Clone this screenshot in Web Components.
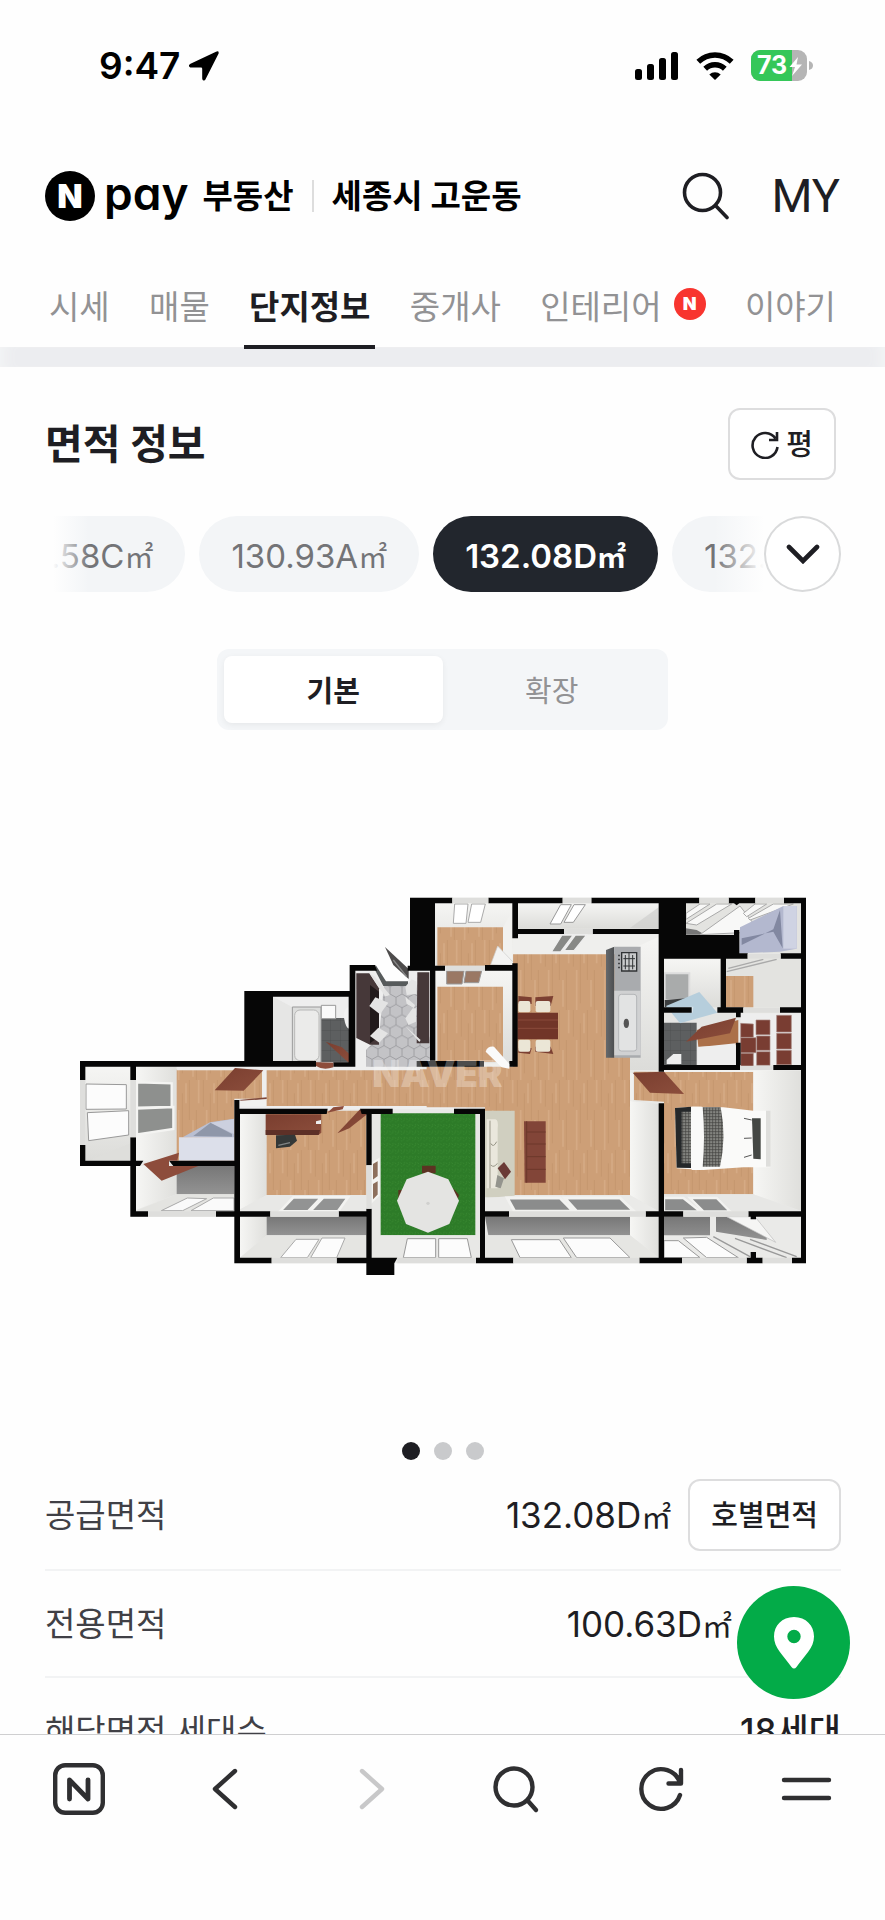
<!DOCTYPE html>
<html lang="ko">
<head>
<meta charset="utf-8">
<meta name="viewport" content="width=device-width, initial-scale=1">
<title>Npay 부동산 - 단지정보</title>
<style>
  body { margin: 0; background: #fefefe; color: #1e1e23; font-family: Inter, "Noto Sans CJK KR", sans-serif; }
</style>
</head>
<body>
<estate-app></estate-app>

<script>
const define = (name, html) => {
  const template = document.createElement('template');
  template.innerHTML = `<style>
    *, *::before, *::after { box-sizing: border-box; }
    button { font: inherit; color: inherit; background: none; border: 0; padding: 0; margin: 0; }
    a { color: inherit; text-decoration: none; }
    svg { display: block; flex: none; }
  </style>` + html;
  customElements.define(name, class extends HTMLElement {
    constructor() {
      super();
      this.attachShadow({ mode: 'open' }).append(template.content.cloneNode(true));
    }
  });
};

define('status-bar', `
<style>
  :host { display: flex; align-items: center; justify-content: space-between; height: 132px; padding: 0 72px 0 99px; color: #000; flex: none; }
  .side { display: flex; align-items: center; }
  time { font: 600 37px/44px Inter, sans-serif; margin-right: 9px; }
  .icons { gap: 17px; }
</style>
<div class="side"><time>9:47</time>
  <svg width="30" height="30" viewBox="0 0 30 30" aria-hidden="true"><path d="M29.600 2.600Q30.200-.6 27 .7L1.500 12.700Q-1.200 14.500 .6 16 1.200 16.600 2.500 16.600H12Q13.200 16.600 13.200 17.800V27.500Q13.600 31 16.300 28.700Z"/></svg>
</div>
<div class="side icons">
  <svg width="44" height="28" viewBox="0 0 44 28" aria-label="신호"><rect y="17" width="7" height="11" rx="2.500"/><rect x="12" y="12" width="7" height="16" rx="2.500"/><rect x="24" y="6" width="7" height="22" rx="2.500"/><rect x="36" width="7" height="28" rx="2.500"/></svg>
  <svg width="38" height="28" viewBox="0 0 38 28" aria-label="Wi-Fi"><path d="M2.300 9.700a24 24 0 0 1 33.400 0M9.200 16.700a14.200 14.200 0 0 1 19.600 0" fill="none" stroke="#000" stroke-width="5.400"/><path d="M19 28l-5.700-5.500a8.300 8.300 0 0 1 11.400 0z"/></svg>
  <svg width="62" height="32" viewBox="0 0 62 32" aria-label="배터리 73%"><defs><clipPath id="cell"><rect width="56" height="31" rx="9"/></clipPath></defs><g clip-path="url(#cell)"><rect width="56" height="31" fill="#b5b5b5"/><rect width="41" height="31" fill="#35c759"/></g><path d="M58 11q4 1 4 4.500t-4 4.500z" fill="#b5b5b5"/><text x="6" y="24" font-family="Inter, sans-serif" font-weight="700" font-size="25" fill="#fff">73</text><path d="M47 7L38.500 17H44l-3 9L51 14.500h-5.500z" fill="#fff"/></svg>
</div>`);

define('site-header', `
<style>
  :host { display: flex; align-items: center; height: 128px; padding: 0 45px; flex: none; color: #000; }
  .brand { display: flex; align-items: center; font-weight: 700; font-size: 33px; line-height: 50px; }
  .mark { width: 50px; height: 50px; border-radius: 50%; background: #000; color: #fff; font: 900 33px/50px Inter, sans-serif; text-align: center; }
  .pay { font: 600 46px/50px Inter, sans-serif; font-feature-settings: "cv11"; margin: 0 14px 6px 9px; }
  .bar { width: 2px; height: 32px; background: #ddd; margin: 0 18px; }
  .place { font-weight: 700; font-size: 33px; line-height: 50px; }
  .tools { margin-left: auto; display: flex; align-items: center; gap: 41px; color: #1e1e23; }
  .my { font: 400 47px/56px Roboto, sans-serif; }
</style>
<a class="brand" href="#home"><span class="mark">N</span><span class="pay">pay</span><span>부동산</span></a>
<span class="bar"></span>
<a class="place" href="#area">세종시 고운동</a>
<div class="tools">
  <button aria-label="검색"><svg width="48" height="48" viewBox="0 0 48 48" fill="none" stroke="#1e1e23" stroke-width="3.600" stroke-linecap="round"><circle cx="20.500" cy="20.500" r="18"/><path d="M33.500 33.500L45 45.500"/></svg></button>
  <a class="my" href="#my">MY</a>
</div>`);

define('tab-link', `
<style>
  :host { display: block; height: 100%; }
  a { position: relative; display: flex; align-items: center; gap: 12px; height: 100%; padding: 6px 5px 0; font-size: 33px; line-height: 48px; color: #929294; white-space: nowrap; }
  :host([current]) a { color: #1e1e23; font-weight: 700; }
  :host([current]) a::after { content: ""; position: absolute; left: 0; right: 0; bottom: -2px; height: 4px; background: #1e1e23; }
</style>
<a href="#tab"><slot></slot></a>`);

define('new-badge', `
<style>:host { display: block; width: 32px; height: 32px; margin-bottom: 6px; border-radius: 50%; background: #f8352f; color: #fff; font: 900 18px/32px Inter, sans-serif; text-align: center; }</style>
<slot></slot>`);

define('tab-bar', `
<style>
  :host { display: block; flex: none; }
  nav { display: flex; justify-content: space-between; height: 87px; padding: 0 44px; position: relative; z-index: 1; }
  .band { height: 20px; background: #ecedf0; box-shadow: inset 14px 0 14px -10px #f4f5f6, inset -14px 0 14px -10px #f4f5f6; }
</style>
<nav>
  <tab-link>시세</tab-link><tab-link>매물</tab-link><tab-link current>단지정보</tab-link><tab-link>중개사</tab-link><tab-link>인테리어<new-badge>N</new-badge></tab-link><tab-link>이야기</tab-link>
</nav>
<div class="band"></div>`);

define('outline-button', `
<style>
  :host { display: block; flex: none; }
  button { display: flex; align-items: center; gap: 7px; height: 72px; padding: 2px 21px 0; border: 2px solid #ddddde; border-radius: 12px; background: #fff; font-size: 29px; line-height: 40px; font-weight: 500; color: #1e1e23; white-space: nowrap; }
</style>
<button><slot></slot></button>`);

define('area-chip', `
<style>
  :host { display: block; flex: none; }
  button { height: 76px; padding: 4px 32px 0; border-radius: 38px; background: #f3f5f7; color: #737477; font-size: 33px; line-height: 48px; white-space: nowrap; }
  ::slotted(small) { font-size: 29px; line-height: 40px; }
  :host([selected]) button { background: #22262d; color: #fff; font-weight: 600; }
</style>
<button><slot></slot></button>`);

define('chip-strip', `
<style>
  :host { display: flex; align-items: center; height: 76px; margin: 36px 44px 0 53px; }
  .track { position: relative; flex: 1; min-width: 0; overflow: hidden; display: flex; gap: 14px; height: 76px; }
  .track area-chip:first-child { margin-left: -88px; }
  .track::before, .track::after { content: ""; position: absolute; z-index: 1; top: 0; bottom: 0; pointer-events: none; }
  .track::before { left: 0; width: 36px; background: linear-gradient(90deg, #fefefe, #fefefe00); }
  .track::after { right: 0; width: 50px; background: linear-gradient(270deg, #fefefe, #fefefe00); }
  .more { display: grid; place-items: center; flex: none; width: 77px; height: 76px; border: 2px solid #d9dadb; border-radius: 50%; background: #fff; }
</style>
<div class="track"><area-chip>130.58C<small>㎡</small></area-chip><area-chip>130.93A<small>㎡</small></area-chip><area-chip selected>132.08D<small>㎡</small></area-chip><area-chip>132.08E<small>㎡</small></area-chip></div>
<button class="more" aria-label="면적 더보기"><svg width="34" height="20" viewBox="0 0 34 20" fill="none" stroke="#1e1e23" stroke-width="4.600" stroke-linecap="round"><path d="M3 3l14 14L31 3"/></svg></button>`);

define('plan-switch', `
<style>
  :host { display: flex; width: 451px; max-width: 90%; height: 81px; margin: 57px auto 0; padding: 7px; border-radius: 12px; background: #f4f6f8; }
  button { flex: 1; padding-top: 4px; border-radius: 8px; font-size: 29px; line-height: 40px; color: #929294; }
  .on { background: #fff; color: #1e1e23; font-weight: 600; box-shadow: 0 2px 6px #0000000f; }
</style>
<button class="on" aria-pressed="true">기본</button><button aria-pressed="false">확장</button>`);

define('floor-plan', `
<style>
  :host { display: block; margin-top: 140px; }
  svg { width: 100%; height: auto; }
</style>
<svg viewBox="-180 0 2655 1260" role="img" aria-label="132.08D㎡ 평면도">
  <defs>
    <pattern id="wood" width="84" height="210" patternUnits="userSpaceOnUse"><rect width="84" height="210" fill="#cd9f77"/><path d="M10 0V80M31 40V190M52 0V120M73 90V210" stroke="#c0916a" stroke-width="2"/><path d="M20 90V210M42 10V70M63 120V200M80 0V70" stroke="#d5aa84" stroke-width="5"/></pattern>
    <pattern id="hex" width="36" height="62" patternUnits="userSpaceOnUse"><rect width="36" height="62" fill="#c3c3c6"/><path d="M0 10L18 0 36 10V31L18 41 0 31ZM18 41V62" fill="none" stroke="#8e8e92" stroke-width="2"/></pattern>
    <pattern id="grass" width="17" height="19" patternUnits="userSpaceOnUse"><rect width="17" height="19" fill="#2d7b28"/><path d="M2 4l3 4M10 12l3-5M6 16l-3-3M14 2l-2 3" stroke="#3d9035" stroke-width="2"/></pattern>
    <pattern id="tile" width="30" height="30" patternUnits="userSpaceOnUse"><rect width="30" height="30" fill="#5d5f60"/><path d="M0 0H30M0 0V30" stroke="#484a4b" stroke-width="2"/></pattern>
    <pattern id="check" width="9" height="9" patternUnits="userSpaceOnUse"><rect width="9" height="9" fill="#83847f"/><path d="M0 2H9M2 0V9" stroke="#3f403e" stroke-width="2"/></pattern>
    <linearGradient id="wall" x2="0" y2="1"><stop stop-color="#f5f5f3"/><stop offset="1" stop-color="#dcdcd9"/></linearGradient>
    <linearGradient id="side"><stop stop-color="#f6f6f4"/><stop offset="1" stop-color="#dfdfdc"/></linearGradient>
    <linearGradient id="slate" x2="0" y2="1"><stop stop-color="#777"/><stop offset="1" stop-color="#939393"/></linearGradient>
    <linearGradient id="steel"><stop stop-color="#66696c"/><stop offset="1" stop-color="#4c4e50"/></linearGradient>
    <linearGradient id="mahogany" x2="1" y2="1"><stop stop-color="#7a3e2f"/><stop offset="1" stop-color="#8c4e3c"/></linearGradient>
  </defs>

  <path fill="#e9e9e7" d="M60 573H553V363H869V285H945L980 340H1050V83H2238V1180H523V1040H211V888H60Z"/>

  <!-- left rooms -->
  <path fill="url(#wall)" d="M76 590H211V872H76Z"/><path fill="#dededb" d="M100 866L211 820V872H90Z"/>
  <g fill="#fcfcfc" stroke="#999" stroke-width="3"><path d="M78 642L199 644V717L78 718Z"/><path d="M82 728L206 722V795L86 812Z"/></g>
  <path fill="url(#side)" d="M228 590H350V872H228Z"/>
  <g fill="#8e908e" stroke="#f4f4f2" stroke-width="7"><path d="M231 637L335 640V711L231 713Z"/><path d="M231 716L340 711V777L231 793Z"/></g>
  <path fill="url(#wood)" d="M350 598H1220V712H618V686H523V872H350Z"/>
  <path stroke="#eee" stroke-width="14" d="M613 598V690M350 594H1080"/>
  <path fill="url(#mahogany)" d="M525 594L610 601 551 662 464 661Z"/>
  <path fill="#7d4638" d="M537 690L620 682V688L545 694Z"/><path fill="#f1f1ef" d="M540 692L620 688V714H540Z"/>
  <path fill="#b9bfd2" d="M368 802L450 757 522 746V804Z"/><path fill="#8f97a9" d="M400 798L452 758 516 792V800Z"/><path fill="#ccd0df" d="M452 758L522 747V792Z"/><path fill="#dcdfea" d="M357 802H523V872H357Z"/>
  <path fill="url(#side)" d="M228 888H350V972L228 1020Z"/><path fill="url(#slate)" d="M350 888H523V973H350Z"/><path fill="#e4e4e1" d="M228 1022L350 973H523V1024H228Z"/>
  <g fill="#fafafa" stroke="#aaa" stroke-width="3"><path d="M304 1022L382 984 440 986 368 1022Z"/><path d="M393 1022L460 984H522V1022Z"/></g>

  <!-- bathroom -->
  <path fill="#eee" d="M639 380H869V577H639Z"/><path fill="#dadad7" d="M639 380L695 410V577H639Z" opacity=".4"/><path fill="url(#tile)" d="M783 444H869V577H783Z"/>
  <path fill="#dcdddc" stroke="#999" stroke-width="3" d="M697 411H783V577H697Z"/><rect x="704" y="420" width="73" height="152" rx="16" fill="#ebebea" stroke="#b8b8b7" stroke-width="3"/>
  <path fill="#fafafa" stroke="#999" stroke-width="3" d="M784 406H827V446H784Z"/><path fill="#f2f2f2" d="M869 410Q850 412 852 444 858 478 869 476Z"/>
  <path fill="url(#mahogany)" d="M797 515L846 532 868 552V580Z"/>

  <!-- entrance -->
  <path fill="#eee" d="M886 302H1110V590H886Z"/><path fill="url(#hex)" d="M972 345H1068L1110 510V590H918V540L957 500Z"/>
  <path fill="#fefefe" d="M945 283H1045V334H978Z"/><path fill="#575b5c" d="M947 285L978 334H1044V348H970L945 300Z"/>
  <path fill="#463839" d="M889 310H928L957 355V524H930L889 504Z"/><path fill="#211a1b" d="M930 345L957 365V500L930 520Z"/><path fill="#463839" d="M1072 307H1108V520H1070Z"/>
  <g fill="#e4e4e4"><path d="M928 310L945 320 990 375 976 380Z"/><path d="M928 408L946 382 985 398 960 433Z"/><path d="M930 498L955 473 984 490 958 518Z"/><path d="M1036 350L1055 328 1070 335V372L1040 375ZM1036 380L1065 405 1062 415 1040 402ZM1036 445L1058 415H1068V455L1045 465ZM1036 468L1082 510 1078 516Z"/></g>
  <path fill="#4d4b4b" d="M975 231L1046 297V327L1040 322 1000 285Z"/><path stroke="#888" stroke-width="4" d="M1000 270L1040 320"/>

  <!-- study and its balcony -->
  <path fill="url(#side)" d="M540 733H620V975L540 1020Z"/><path fill="url(#wood)" d="M620 722H919V975H620Z"/><path fill="#e8e8e6" d="M540 1024V1018L620 975H919V1024Z"/>
  <path fill="url(#mahogany)" d="M617 733H784V788L776 794H617Z"/><path fill="#5d3027" d="M617 780H780L776 795H617Z"/><path fill="#eee" d="M768 754L783 750V762H768Z"/>
  <path fill="#343838" d="M648 796L705 794 711 812 690 830 648 835Z"/><path stroke="#818585" stroke-width="4" d="M655 826L690 818"/>
  <path fill="url(#mahogany)" d="M900 718L925 730 868 775 832 790Z"/><path stroke="#eee" stroke-width="10" d="M540 713H1220"/><path fill="#8d4c3b" d="M820 712L852 708 848 718 802 728Z"/>
  <g fill="#929393" stroke="#f3f3f1" stroke-width="8"><path d="M660 1024L700 982H784L744 1024Z"/><path d="M750 1024L790 982H864L834 1024Z"/></g>
  <path fill="url(#side)" d="M540 1040H620V1096L540 1163Z"/><path fill="url(#slate)" d="M620 1040H919V1096H620Z"/><path fill="#e5e5e2" d="M540 1163L620 1096H919V1163Z"/>
  <g fill="#fcfcfc" stroke="#aaa" stroke-width="3"><path d="M662 1163L708 1108H777L742 1163Z"/><path d="M752 1163L786 1104H855L830 1163Z"/></g>

  <!-- garden -->
  <path fill="#e7e7e5" d="M935 733H1260V1163H935Z"/><path fill="url(#grass)" d="M962 730H1246V1096H962Z"/>
  <path fill="#5c3322" d="M1086 887H1127V910H1086ZM1015 960H1030V985H1015ZM1180 955L1197 975 1190 1000Z"/>
  <path fill="#e4e4e2" d="M1104 905L1165 928 1197 992 1168 1062 1104 1088 1038 1062 1011 992 1040 928Z"/><circle cx="1104" cy="1000" r="5" fill="#d0d0ce"/>
  <g fill="#8d6f5c" stroke="#f4f4f2" stroke-width="6"><path d="M936 880L956 868V920L936 935Z"/><path d="M936 940L956 928V975L936 995Z"/></g>
  <path fill="#e8e8e6" d="M935 1163L962 1096H1260V1163Z"/><g fill="#fcfcfc" stroke="#999" stroke-width="3"><path d="M1030 1163L1042 1106H1127V1163Z"/><path d="M1136 1163V1106H1222L1234 1163Z"/></g>

  <g transform="translate(1110 0)">
    <!-- top rooms -->
    <path fill="url(#wall)" d="M16 100H248V290H16Z"/><path fill="url(#wood)" d="M22 172H219V287H22Z"/><path fill="#f1f1ef" d="M219 172L248 120V280H219Z"/>
    <g fill="#fff" stroke="#aaa" stroke-width="3"><path d="M74 102H114L108 160H70Z"/><path d="M125 102H166L152 157H114Z"/></g>
    <path fill="#f3f3f2" stroke="#ccc" stroke-width="2" d="M203 228L250 277 247 286 182 284Z"/>
    <path fill="url(#wall)" d="M264 100H686V176H264Z"/><path fill="#ccccc9" d="M600 174L686 112V176Z" opacity=".6"/>
    <g fill="#fff" stroke="#999" stroke-width="3"><path d="M392 104H424L392 162H360Z"/><path d="M432 104H466L430 157H402Z"/></g>
    <path fill="#efefed" d="M250 194H686V255H245Z"/>
    <g fill="#888986" stroke="#eee" stroke-width="4"><path d="M396 195H430L392 246H364Z"/><path d="M436 195H470L432 242H402Z"/></g>
    <path fill="url(#wall)" d="M16 302H248V580H16Z"/><path fill="url(#wood)" d="M22 350H219V576H22Z"/>
    <g fill="#9a7864" stroke="#999" stroke-width="3"><path d="M50 303H102L96 342H50Z"/><path d="M108 303H155L146 338H102Z"/></g>

    <!-- living room -->
    <path fill="url(#wood)" d="M249 253H600V975H165V712H-10V590H249Z"/><path fill="url(#wall)" d="M600 240L686 200V600H600Z"/>
    <path fill="url(#steel)" d="M528 240L553 230V563H528Z"/><path fill="#a9abae" d="M553 230H632V563H553Z"/><path fill="#d0d1d2" d="M553 362H632V556H553Z"/><rect x="566" y="373" width="54" height="170" rx="8" fill="#e2e3e3" stroke="#b4b6b8" stroke-width="3"/>
    <path fill="#c9cbcc" stroke="#303335" stroke-width="4" d="M575 248H620V303H575Z"/><path fill="none" stroke="#303335" stroke-width="3" d="M597 248V303M580 266H615M580 288H615M586 255V298M608 255V298"/><path stroke="#303335" stroke-width="5" stroke-dasharray="5 7" d="M567 254V296"/><ellipse cx="589" cy="460" rx="8" ry="14" fill="#555"/>
    <g fill="#7c4032"><path d="M265 378L305 382V402H265ZM316 382L370 378 362 408H316ZM265 548L300 552 305 535H265ZM316 545L370 552 362 530H316Z"/></g><g fill="#ebe6d6"><rect x="265" y="393" width="36" height="34" rx="6"/><rect x="317" y="393" width="44" height="34" rx="6"/><rect x="265" y="509" width="36" height="36" rx="6"/><rect x="317" y="509" width="44" height="36" rx="6"/></g>
    <path fill="#713528" d="M262 428H384V508H262Z"/><path stroke="#8a4a3b" stroke-width="3" d="M262 450H384M262 475H384"/>
    <path fill="#d0cfc0" d="M165 722H254V982H165Z"/><path fill="#eae7dc" d="M170 748H196Q206 750 203 775V955H170Z"/><path fill="none" stroke="#999788" stroke-width="3" d="M180 752V955M182 820Q190 835 200 815M182 885Q192 895 202 880"/><path fill="#6a3a36" d="M203 895L222 876 243 905 225 928Z"/><path fill="#94948d" d="M202 915L222 925 212 955 196 950Z"/>
    <path fill="#824538" d="M282 754H347V938H284Z"/><path fill="none" stroke="#6d382b" stroke-width="3" d="M290 754V938M290 786H347M290 822H347M290 860H347M290 898H347"/>
    <path fill="url(#side)" d="M600 693L686 702V1024L600 975Z"/>
    <path fill="#eaeae8" d="M165 1024V985L254 977H600L686 1024Z"/><g fill="#8b8c8c" stroke="#f2f2f0" stroke-width="9"><path d="M232 984H390L430 1024H254Z"/><path d="M404 984H570L612 1024H440Z"/></g>
    <path fill="url(#slate)" d="M165 1040H600V1096H175Z"/><path fill="url(#side)" d="M600 1040H686V1163L600 1096Z"/><path fill="#e6e6e3" d="M165 1096H600L686 1163H165Z"/>
    <g fill="#fcfcfc" stroke="#999" stroke-width="3"><path d="M244 1109H388L424 1163H270Z"/><path d="M400 1104H540L600 1163H440Z"/></g>

    <!-- right rooms -->
    <path fill="#e3e3e0" d="M768 100H1113V250H768Z"/><path fill="#777" d="M768 175L800 180 825 194H768Z"/><g fill="#f8f8f7" stroke="#aaa" stroke-width="3"><path d="M768 130L810 102H840L768 148ZM768 160L860 102H905L800 165Z"/><path d="M810 194L930 108 970 160 935 188Z"/><path d="M940 130L975 102H1010L950 140ZM955 145L1030 102H1090L960 150Z"/></g>
    <path fill="#b3b8cf" d="M930 172L1060 108H1100V236L1050 245 928 250Z"/><path fill="#8288a1" d="M935 225L1030 178 1050 120 1058 235 1030 185 935 205Z"/><path fill="#cfd3e3" d="M1060 108H1100V236H1060Z"/>
    <path fill="url(#wall)" d="M702 268H872V412H702Z"/><path fill="#a9abab" stroke="#ddd" stroke-width="6" d="M704 310H778V390H704Z"/><path fill="#3c3e3f" d="M704 390L770 385 720 412H704Z"/>
    <path fill="#e3e3e0" d="M888 268H1113V412H888Z"/><path fill="url(#wood)" d="M888 318H970V412H888Z"/><path stroke="#aaa" stroke-width="4" d="M890 305L1040 268M895 295L1000 268"/>
    <path fill="#e5e5e3" d="M702 430H920V585H702Z"/><path fill="url(#tile)" d="M702 458H800V585H702Z"/><path fill="#ab7049" d="M800 480L925 450V525L805 530Z"/><path fill="#eee" d="M802 532L917 520V585H802Z"/>
    <path fill="#b6cedc" d="M708 408L808 366 862 428 750 460Z"/><path fill="#fff" d="M732 412L790 410 788 428H705V412Z" opacity=".5"/><path fill="url(#mahogany)" d="M768 515L815 470 918 443 900 490Z"/><path fill="#eee" d="M710 570L730 552H754V582H710Z"/>
    <path fill="#eee" d="M932 430H1113V585H932Z"/><g fill="#793d32" stroke="#a98d86" stroke-width="2"><path d="M932 460L970 462V502H932ZM978 450H1020V494H978ZM1040 436H1084V486H1040ZM932 503H978V548H932ZM980 498H1020V541H980ZM1040 490H1084V537H1040ZM932 550H970V590H932ZM980 545H1020V586H980ZM1040 541H1084V584H1040Z"/></g>
    <path fill="url(#wood)" d="M612 605H970V973H702V695L612 690Z"/><path stroke="#f1f1ef" stroke-width="10" d="M605 608V692M702 601H1030"/><path fill="url(#mahogany)" d="M608 608L702 605 762 672 660 668Z"/>
    <path fill="url(#side)" d="M970 602H1113V1022L970 973Z"/>
    <path fill="#fafaf9" d="M735 714L785 710 880 712 970 722 1022 722V892H940L820 900 740 895Z"/><path fill="#25282a" d="M735 714L783 710V894L740 893Z"/><path fill="url(#check)" d="M755 725H783V880H755ZM818 712H872Q890 800 870 890H818Q826 800 818 712Z"/><path fill="#fafaf9" d="M785 710H815V900H785Z"/><path fill="#dededc" d="M1008 722H1022V890H1008Z"/><path fill="#444744" d="M966 745H992V868L970 866Z"/><path stroke="#555" stroke-width="3" d="M942 745L965 750M942 805L965 804M942 862L965 855"/>
    <path fill="#e7e7e5" d="M702 1024V973H970L1113 1024Z"/><path fill="#8b8c8c" stroke="#f2f2f0" stroke-width="7" d="M702 984H760L810 1024H702ZM780 984H860L900 1024H820Z"/>
    <path fill="#eaeae8" d="M702 1040H1113V1163H702Z"/><path fill="url(#slate)" d="M702 1040H840V1096H702ZM858 1040H890L1010 1096V1110L858 1085Z"/><path fill="#f5f5f4" stroke="#bbb" stroke-width="2" d="M890 1040H975L1037 1117Z"/><g fill="#fcfcfc" stroke="#999" stroke-width="3"><path d="M702 1112H745L810 1163H702Z"/><path d="M760 1104L830 1102 925 1163H830Z"/></g><path stroke="#999" stroke-width="4" d="M850 1100L960 1160M915 1105L1070 1163M960 1108L1100 1160"/>
  </g>

  <!-- structural walls -->
  <g fill="#060606">
    <path d="M60 573H768V590H60ZM60 573H76V630H60ZM60 825H76V872H250L240 888H60ZM211 590H228V630H211ZM211 802H228V1024H264V1040H211ZM327 872H523V888H340ZM553 363H869V380H639V577H553ZM869 285H945L951 302H886V590H866V380H869ZM820 577H886V590H820ZM523 690H538V716H803L800 732H540V1024H631V1040H540V1163H635V1180H523V1040H468V1024H523ZM836 1024H919V1040H836ZM830 1163H919V1016H935V1163H1012L1003 1180V1215H919V1180H830ZM900 716H998V732H935V886H919V732H905Z"/>
    <path d="M1050 83H1177V100H1125V287H1155V302H1126V573H1272V590H1070V573H1110V302H1043V287H1050Z"/>
  </g>
  <g fill="#060606" transform="translate(1110 0)">
    <path d="M175 83H398V100H264V177H402V192H264V205H247V100H175ZM165 285H247V280H263V590H238V573H247V302H165ZM484 83H808V100H768V195H912V180H928V250H953V266H888V412H940V428H932V442H918V428H862V412H872V266H702V412H785V428H702V585H918V518H932V585H930V600H702V605H686V192H488V177H686V100H484ZM896 83H976V100H928L920 106 912 100H896ZM1062 83H1128V1180H1086V1163H1113V1040H955V1024H1113V600H1030V585H1113V428H1050V412H1113V266H1052V250H1113V100H1062ZM686 700H702V1024H760V1040H702V1163H756V1180H628V1163H686V1040H647V1024H686ZM72 716H165V1024H237V1040H165V1163H250V1180H138V1163H150V732H72ZM962 1040H978V1048H962ZM950 1163H962V1146H978V1163H998V1180H950Z"/>
  </g>
  <g fill="#dededc"><path d="M60 630H76V825H60ZM211 630H228V802H211ZM264 1024H468V1040H264ZM631 1024H836V1040H631ZM635 1163H830V1180H635ZM919 886H935V1016H919ZM1012 1163H1248V1180H1012ZM1177 83H1285V100H1177ZM1508 83H1594V100H1508ZM1512 177H1598V192H1512ZM1918 83H2006V100H1918ZM2086 83H2172V100H2086ZM2063 252H2162V266H2063ZM2050 413H2160V428H2050ZM1347 1024H1757V1040H1347ZM1360 1163H1738V1180H1360ZM1870 1024H2065V1040H1870ZM1866 1163H2060V1180H1866ZM2108 1163H2196V1180H2108Z"/><path d="M1157 287H1275V302H1157ZM2040 587H2138V600H2040Z"/></g>
  <path fill="#8d4c3b" d="M250 882L357 848 352 872H327V888H415L305 932Z"/><path fill="#8d4c3b" d="M768 577L820 578V592Q790 602 768 588Z"/>
  <path fill="#fafafa" d="M1277 545Q1282 528 1302 530L1348 582V596L1325 592Z"/>
  <text x="937" y="652" font-family="Inter, sans-serif" font-weight="900" font-size="110" fill="#fff" fill-opacity=".3">NAVER</text>
</svg>`);

define('page-dots', `
<style>
  :host { display: flex; justify-content: center; gap: 14px; margin-top: 152px; }
  i { width: 18px; height: 18px; border-radius: 50%; background: #c9cacc; }
  .now { background: #1e1e23; }
</style><i class="now"></i><i></i><i></i>`);

define('area-facts', `
<style>
  :host { display: block; padding: 0 44px 0 45px; }
  dl { margin: 0; }
  .row { display: flex; align-items: center; justify-content: space-between; min-height: 107px; border-bottom: 2px solid #f2f3f4; }
  .row:first-child { min-height: 111px; }
  dt, dd { margin: 0; font-size: 33px; line-height: 48px; white-space: nowrap; }
  dt { color: #404046; }
  dd { display: flex; align-items: center; gap: 17px; font-size: 35px; }
  .area small { font-size: 30px; line-height: 40px; }
  .inset { padding-right: 109px; }
  .homes { font-weight: 500; }
</style>
<dl>
  <div class="row"><dt>공급면적</dt><dd><span class="area">132.08D<small>㎡</small></span><outline-button>호별면적</outline-button></dd></div>
  <div class="row"><dt>전용면적</dt><dd class="inset"><span class="area">100.63D<small>㎡</small></span></dd></div>
  <div class="row"><dt>해당면적 세대수</dt><dd class="homes">18세대</dd></div>
</dl>`);

define('map-button', `
<style>
  :host { position: absolute; right: 35px; bottom: 35px; }
  button { display: grid; place-items: center; width: 113px; height: 113px; border-radius: 50%; background: #03ab48; }
</style>
<button aria-label="지도"><svg width="40" height="52" viewBox="0 0 40 52"><path fill="#fff" fill-rule="evenodd" d="M20 0C8 0 0 8.500 0 19.500 0 31 9 38 17.500 50Q20 53 22.500 50C31 38 40 31 40 19.500 40 8.500 32 0 20 0Zm0 12.800a6.700 6.700 0 1 1 0 13.400 6.700 6.700 0 0 1 0-13.400Z"/></svg></button>`);

define('browser-bar', `
<style>
  :host { display: flex; justify-content: space-between; align-items: flex-start; height: 186px; box-sizing: border-box; flex: none; padding: 28px 53px 0; border-top: 1px solid #cfcfd0; background: #fefefe; }
  button { display: grid; place-items: center; width: 52px; height: 52px; }
  svg { fill: none; stroke: #2f2f31; stroke-width: 4.400; stroke-linecap: round; stroke-linejoin: round; }
  button:disabled svg { stroke: #c8c8c9; }
</style>
<button aria-label="네이버 홈"><svg width="52" height="52" viewBox="0 0 52 52"><rect x="2.200" y="2.200" width="47.600" height="47.600" rx="10"/><path stroke-width="4.800" d="M16.500 36V17L35 36V17"/></svg></button>
<button aria-label="뒤로"><svg width="52" height="52" viewBox="0 0 52 52"><path d="M37 8L17 26l20 18"/></svg></button>
<button aria-label="앞으로" disabled><svg width="52" height="52" viewBox="0 0 52 52"><path d="M18 8l20 18-20 18"/></svg></button>
<button aria-label="검색"><svg width="52" height="52" viewBox="0 0 52 52"><circle cx="25" cy="24" r="18.500"/><path d="M39 38l8 9"/></svg></button>
<button aria-label="새로고침"><svg width="52" height="52" viewBox="0 0 52 52"><path d="M45 32a19.800 19.800 0 1 1 0-12M46 7v13.500H33.500"/></svg></button>
<button aria-label="메뉴"><svg width="52" height="52" viewBox="0 0 52 52"><path d="M4 17h45M4 35h45"/></svg></button>`);

define('estate-app', `
<style>
  :host { display: flex; flex-direction: column; height: 100vh; background: #fefefe; overflow: hidden; }
  .view { position: relative; flex: 1; min-height: 0; }
  main { height: 100%; overflow: hidden; }
  .head { display: flex; align-items: center; justify-content: space-between; padding: 41px 49px 0 45px; }
  h2 { margin: 0; font-size: 41px; line-height: 56px; font-weight: 700; }
</style>
<status-bar></status-bar>
<site-header></site-header>
<tab-bar></tab-bar>
<div class="view">
  <main>
    <div class="head"><h2>면적 정보</h2><outline-button><svg width="28" height="28" viewBox="0 0 28 28" fill="none" stroke="#1e1e23" stroke-width="2.600" aria-hidden="true"><path d="M26.500 16A12.500 12.500 0 1 1 24.500 7.500M26 1v8h-8"/></svg>평</outline-button></div>
    <chip-strip></chip-strip>
    <plan-switch></plan-switch>
    <floor-plan></floor-plan>
    <page-dots></page-dots>
    <area-facts></area-facts>
  </main>
  <map-button></map-button>
</div>
<browser-bar></browser-bar>`);
</script>
</body>
</html>
